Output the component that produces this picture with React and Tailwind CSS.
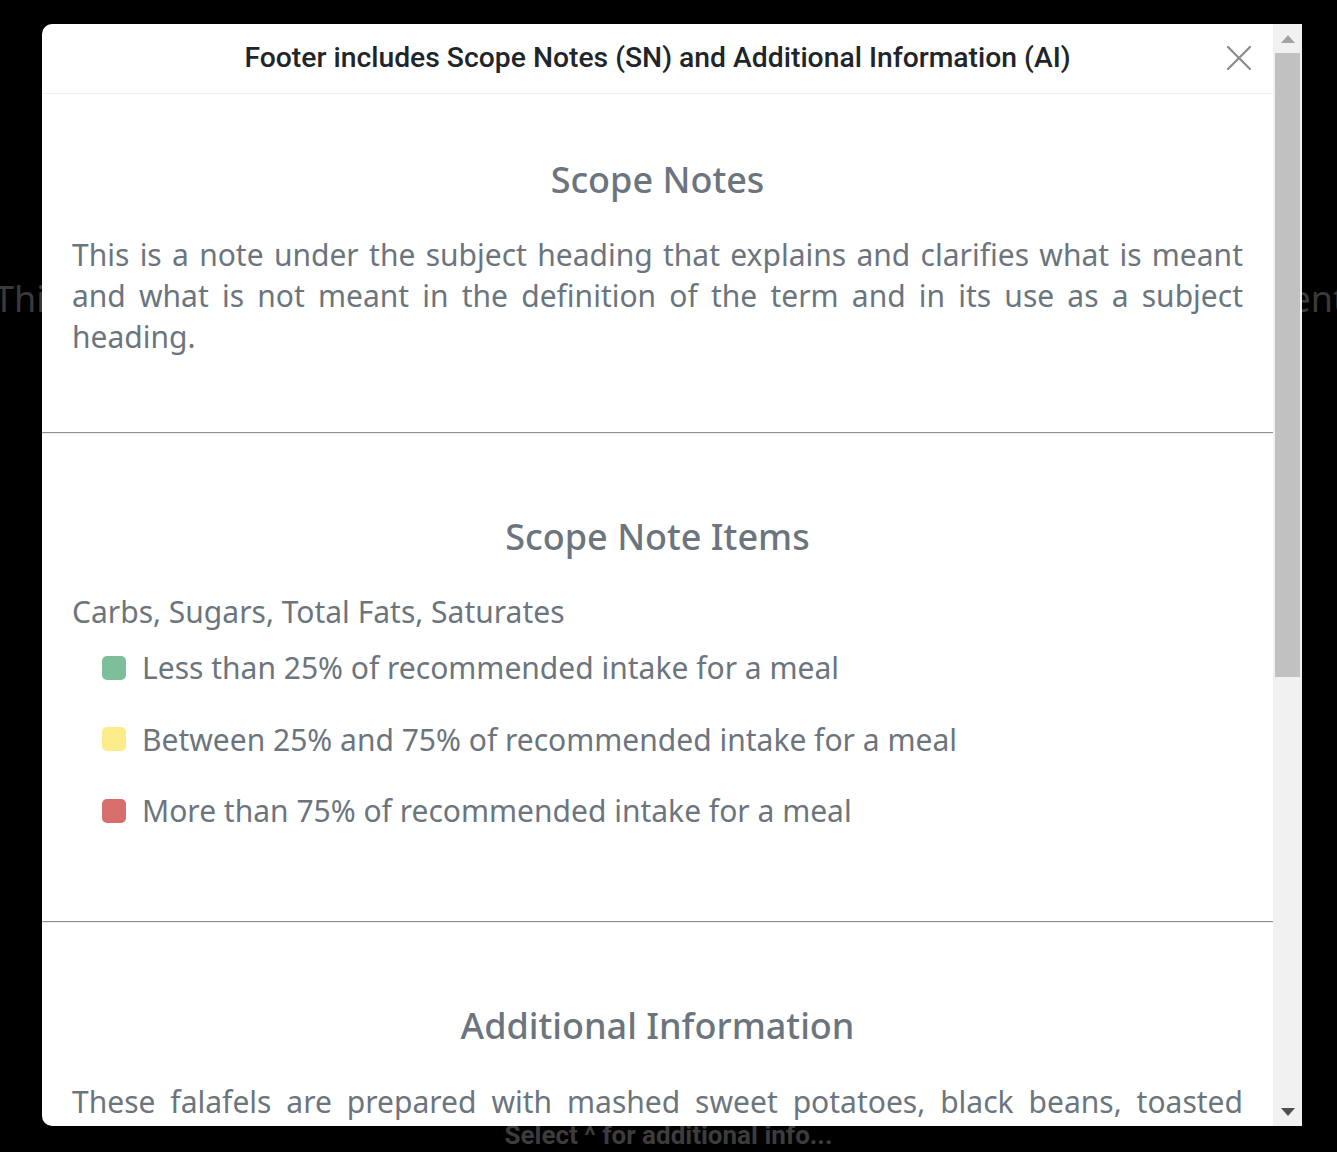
const items = [
  { color: "bg-[#7dbf9b]", text: "Less than 25% of recommended intake for a meal" },
  { color: "bg-[#fdec8a]", text: "Between 25% and 75% of recommended intake for a meal" },
  { color: "bg-[#d76d6d]", text: "More than 75% of recommended intake for a meal" },
];

function Divider() {
  return <div className="h-[3px] border-t border-b border-t-[#8f8f8f] border-b-[#eeeeee]" />;
}

function Heading({ children }) {
  return (
    <h2 className="text-center text-[36px] leading-[1.2] font-medium text-[#6c757d]">{children}</h2>
  );
}

export default function App() {
  return (
    <div className="relative h-[1152px] w-full overflow-hidden bg-black font-['Noto_Sans',sans-serif]">
      {/* page behind the overlay */}
      <div className="flex h-full flex-col">
        <div className="mt-[277px] -ml-[6px] flex w-[1352px] justify-between text-[36px] leading-[44px] text-[#3a3a3a]">
          <span>This</span>
          <span>ent</span>
        </div>
        <div className="mt-auto mb-[1px] text-center font-['Roboto',sans-serif] text-[26px] font-bold leading-[32px] text-[#3c3c3c]">
          Select ^ for additional info...
        </div>
      </div>

      {/* modal */}
      <div className="absolute left-[42px] top-[24px] flex h-[1102px] w-[1260px] overflow-hidden rounded-l-[10px] bg-white">
        <div className="flex w-[1231px] flex-col">
          <div className="relative flex h-[70px] shrink-0 items-center justify-center border-b border-[#eeeeee]">
            <h1 className="font-['Roboto',sans-serif] text-[28.3px] font-medium text-[#212529]">
              Footer includes Scope Notes (SN) and Additional Information (AI)
            </h1>
            <button className="absolute right-[22px] top-[22px]">
              <svg width="24" height="24" viewBox="0 0 24 24">
                <path d="M1 1 L23 23 M23 1 L1 23" stroke="#8a8a8a" strokeWidth="2.2" strokeLinecap="round" />
              </svg>
            </button>
          </div>

          <div className="px-[30px] text-[30px] leading-[41px] text-[#6c757d]">
            <section className="pt-[64px] pb-[75px]">
              <Heading>Scope Notes</Heading>
              <p className="mt-[33px] text-justify">
                This is a note under the subject heading that explains and clarifies what is meant and what is
                not meant in the definition of the term and in its use as a subject heading.
              </p>
            </section>
          </div>
          <Divider />
          <div className="px-[30px] text-[30px] leading-[41px] text-[#6c757d]">
            <section className="pt-[81px] pb-[90px]">
              <Heading>Scope Note Items</Heading>
              <p className="mt-[33px]">Carbs, Sugars, Total Fats, Saturates</p>
              <ul className="mt-[15px] flex flex-col gap-[30.5px] pl-[30px]">
                {items.map((it) => (
                  <li key={it.text} className="flex items-center gap-[16px]">
                    <span className={`h-[24px] w-[24px] shrink-0 rounded-[5px] ${it.color}`} />
                    <span>{it.text}</span>
                  </li>
                ))}
              </ul>
            </section>
          </div>
          <Divider />
          <div className="px-[30px] text-[30px] leading-[41px] text-[#6c757d]">
            <section className="pt-[81px]">
              <Heading>Additional Information</Heading>
              <p className="mt-[33px] text-justify">
                These falafels are prepared with mashed sweet potatoes, black beans, toasted cumin, fresh
                coriander and a hint of garlic, then baked until golden and served with a lemon tahini dip.
              </p>
            </section>
          </div>
        </div>

        {/* scrollbar */}
        <div className="flex w-[29px] shrink-0 flex-col bg-[#f1f1f1]">
          <div className="flex h-[29px] shrink-0 items-center justify-center">
            <svg width="14" height="8" viewBox="0 0 14 8">
              <path d="M7 0 L14 8 L0 8 Z" fill="#a3a3a3" />
            </svg>
          </div>
          <div className="flex-1">
            <div className="mx-[2px] h-[624px] bg-[#c1c1c1]" />
          </div>
          <div className="flex h-[29px] shrink-0 items-center justify-center">
            <svg width="14" height="8" viewBox="0 0 14 8">
              <path d="M0 0 L14 0 L7 8 Z" fill="#505050" />
            </svg>
          </div>
        </div>
      </div>
    </div>
  );
}
